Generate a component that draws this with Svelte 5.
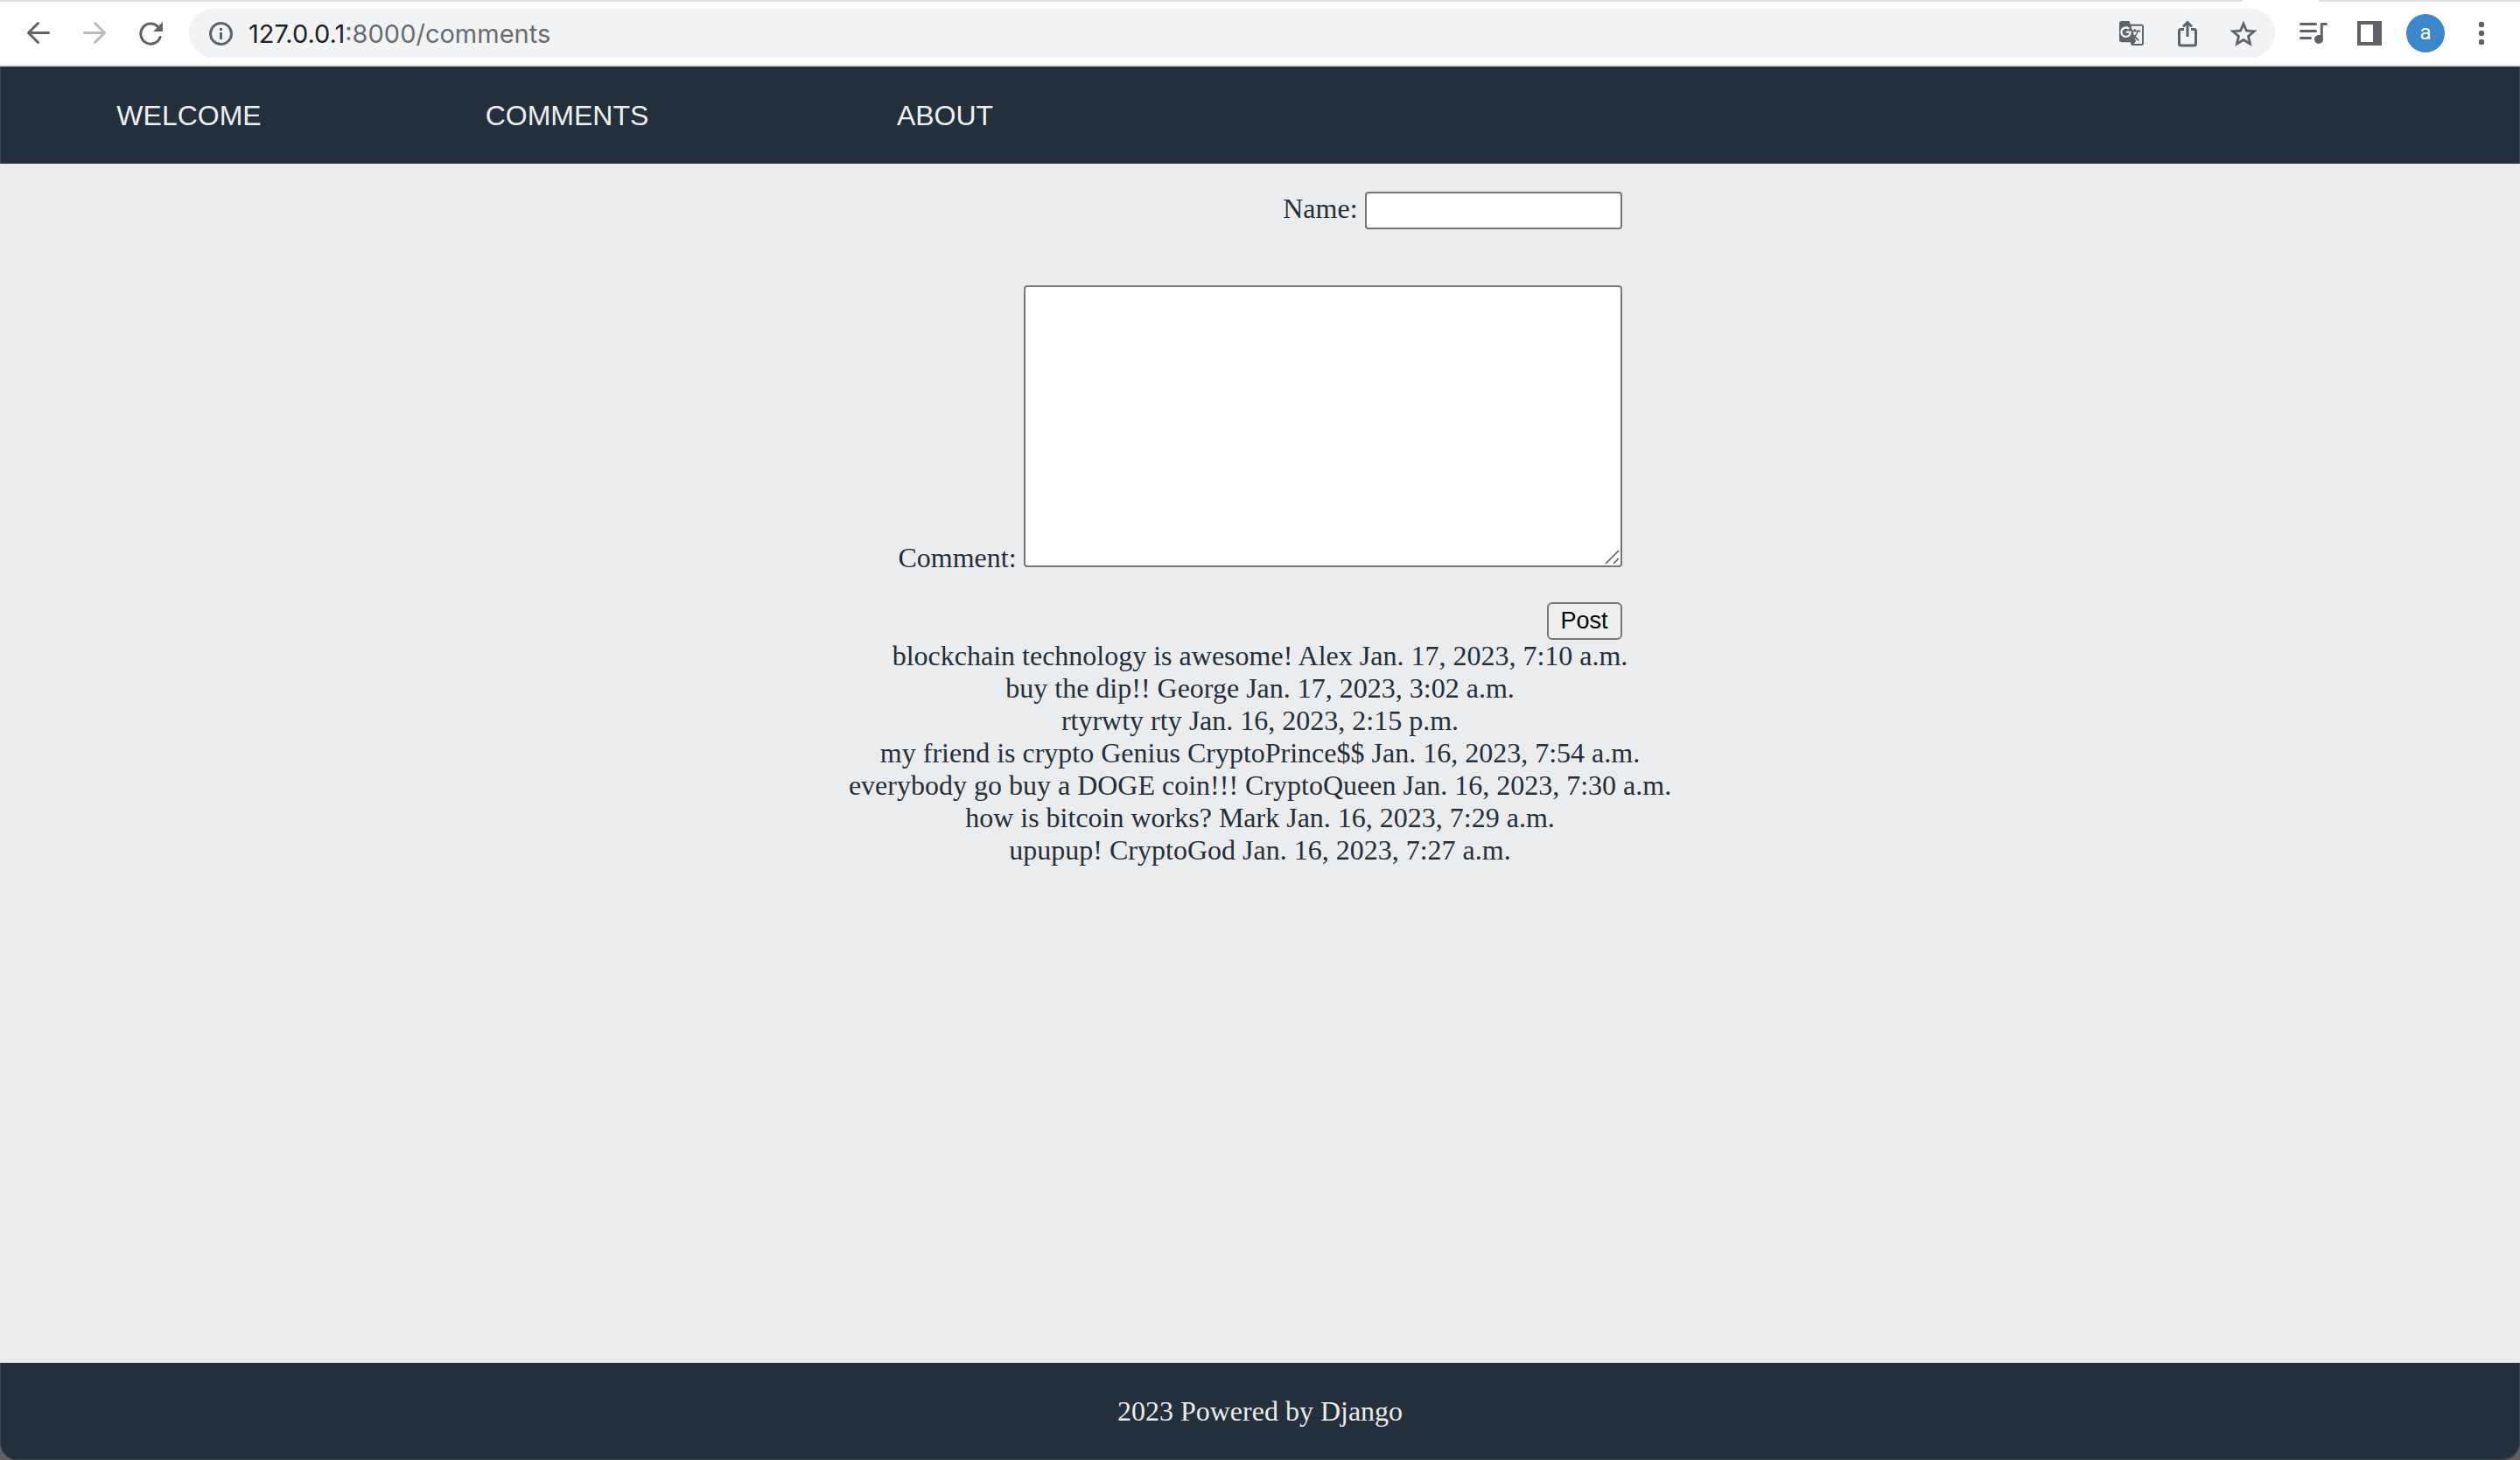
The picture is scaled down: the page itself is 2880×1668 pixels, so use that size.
<script>
  const links = [
    { label: 'WELCOME', href: '#welcome' },
    { label: 'COMMENTS', href: '#comments' },
    { label: 'ABOUT', href: '#about' },
  ];

  const comments = [
    { text: 'blockchain technology is awesome!', author: 'Alex', date: 'Jan. 17, 2023, 7:10 a.m.' },
    { text: 'buy the dip!!', author: 'George', date: 'Jan. 17, 2023, 3:02 a.m.' },
    { text: 'rtyrwty', author: 'rty', date: 'Jan. 16, 2023, 2:15 p.m.' },
    { text: 'my friend is crypto Genius', author: 'CryptoPrince$$', date: 'Jan. 16, 2023, 7:54 a.m.' },
    { text: 'everybody go buy a DOGE coin!!!', author: 'CryptoQueen', date: 'Jan. 16, 2023, 7:30 a.m.' },
    { text: 'how is bitcoin works?', author: 'Mark', date: 'Jan. 16, 2023, 7:29 a.m.' },
    { text: 'upupup!', author: 'CryptoGod', date: 'Jan. 16, 2023, 7:27 a.m.' },
  ];
</script>

<div class="window">
  <div class="tab-edge"><span class="edge-left"></span><span class="edge-right"></span></div>
  <div class="toolbar">
    <button class="tool" type="button" aria-label="Back">
      <svg viewBox="0 0 40 40"><path class="line" d="M31.5 19.5H9M19.5 8.5L8.5 19.5l11 11" /></svg>
    </button>
    <button class="tool faded" type="button" aria-label="Forward">
      <svg viewBox="0 0 40 40"><path class="line" d="M8.5 19.5H31M20.5 8.5l11 11-11 11" /></svg>
    </button>
    <button class="tool" type="button" aria-label="Reload">
      <svg viewBox="0 0 40 40">
        <path class="line" d="M28.5 12.5A11.5 11.5 0 1 0 31.2 24.3" />
        <path d="M34 7v11H23z" />
      </svg>
    </button>

    <div class="address">
      <button class="info" type="button" aria-label="Site information">
        <svg viewBox="0 0 40 40">
          <circle class="line" cx="20.5" cy="20.5" r="12" />
          <path d="M19 14h3v3h-3zM19 19h3v8h-3z" />
        </svg>
      </button>
      <span class="url">127.0.0.1<span class="path">:8000/comments</span></span>
      <button class="tool" type="button" aria-label="Translate this page">
        <svg viewBox="0 0 40 40">
          <g transform="translate(4.73 4.73) scale(1.273)">
            <path d="M21 4H11l-1-3H3c-1.1 0-2 .9-2 2v15c0 1.1.9 2 2 2h8l1 3h9c1.1 0 2-.9 2-2V6c0-1.1-.9-2-2-2zM7 16c-2.76 0-5-2.24-5-5s2.24-5 5-5c1.35 0 2.48.5 3.35 1.3L9.03 8.57c-.38-.36-1.04-.78-2.03-.78-1.74 0-3.15 1.44-3.15 3.21S5.26 14.21 7 14.21c2.01 0 2.84-1.44 2.92-2.41H7v-1.71h4.68c.07.31.12.61.12 1.02C11.8 13.97 9.89 16 7 16zm6.17-5.42h3.7c-.43 1.25-1.11 2.43-2.05 3.47-.31-.35-.6-.72-.86-1.1l-.79-2.37zm8.33 9.92c0 .55-.45 1-1 1H14l2-2.5-1.04-3.1 3.1 3.1.92-.92-3.3-3.25.02-.02c1.13-1.25 1.93-2.69 2.4-4.22H20v-1.3h-4.53V8h-1.29v1.29h-1.44L11.46 5.5h9.04c.55 0 1 .45 1 1v14z" />
          </g>
        </svg>
      </button>
      <button class="tool" type="button" aria-label="Share this page">
        <svg viewBox="0 0 40 40">
          <path class="thin" d="M16 15.5h-3.5a2 2 0 0 0-2 2v14.500a2 2 0 0 0 2 2h15a2 2 0 0 0 2-2V17.500a2 2 0 0 0-2-2H24M20 24V8.500M15 12.500l5-5 5 5" />
        </svg>
      </button>
      <button class="tool" type="button" aria-label="Bookmark this page">
        <svg viewBox="0 0 40 40">
          <g transform="translate(2 3) scale(1.5)">
            <path class="bold" d="M22 9.24l-7.19-.62L12 2 9.19 8.63 2 9.24l5.46 4.73L5.82 21 12 17.27 18.18 21l-1.63-7.03L22 9.24zM12 15.4l-3.76 2.27 1-4.28-3.32-2.88 4.38-.38L12 6.1l1.71 4.04 4.38.38-3.32 2.88 1 4.28L12 15.4z" />
          </g>
        </svg>
      </button>
    </div>

    <button class="tool" type="button" aria-label="Media controls">
      <svg viewBox="0 0 40 40">
        <path class="line" d="M5.5 9.5h17M5.5 17.5h17M5.5 25.5h11M34.5 9.5h-5.2v18" />
        <circle cx="26" cy="27" r="5" />
      </svg>
    </button>
    <button class="tool" type="button" aria-label="Side panel">
      <svg viewBox="0 0 40 40"><path fill-rule="evenodd" d="M6 6h28v28H6zM10 10v20h14V10z" /></svg>
    </button>
    <button class="tool" type="button" aria-label="Profile"><span class="avatar">a</span></button>
    <button class="tool" type="button" aria-label="Menu">
      <svg viewBox="0 0 40 40">
        <circle cx="20" cy="10" r="3.2" /><circle cx="20" cy="20" r="3.2" /><circle cx="20" cy="30" r="3.2" />
      </svg>
    </button>
  </div>

  <nav>
    {#each links as link}
      <a href={link.href}>{link.label}</a>
    {/each}
  </nav>

  <main>
    <form onsubmit={(event) => event.preventDefault()}>
      <div class="row name">
        <label for="name">Name:</label>
        <input id="name" type="text" />
      </div>
      <div class="row comment">
        <label for="comment">Comment:</label>
        <div class="area">
          <textarea id="comment"></textarea>
          <svg class="grip" viewBox="0 0 20 20" aria-hidden="true"><path d="M2 17L17 2M11 17l6-6" /></svg>
        </div>
      </div>
      <button class="post" type="submit">Post</button>
    </form>
    <ul>
      {#each comments as comment}
        <li>{comment.text} {comment.author} {comment.date}</li>
      {/each}
    </ul>
  </main>

  <footer>2023 Powered by Django</footer>
</div>

<style>
  :global(body) {
    margin: 0;
  }

  .window {
    display: flex;
    flex-direction: column;
    min-height: 100vh;
    background: #625f64;
    color: #232f3b;
    font-family: 'Liberation Serif', 'Times New Roman', serif;
    font-size: 32px;
    line-height: 37px;
  }

  button {
    margin: 0;
    font-family: 'Liberation Sans', Arial, sans-serif;
  }

  .tab-edge {
    display: flex;
    justify-content: space-between;
    height: 2px;
    background: #fff;
  }

  .edge-left {
    width: 89%;
    background: #dfdfe5;
  }

  .edge-right {
    width: 8%;
    background: #dfdfe5;
  }

  .toolbar {
    display: flex;
    align-items: center;
    padding: 8px 12px;
    background: #fff;
    border-bottom: 2px solid #dadfdf;
  }

  .tool,
  .info {
    display: flex;
    flex: none;
    align-items: center;
    justify-content: center;
    width: 64px;
    height: 56px;
    padding: 0;
    border: 0;
    background: none;
    color: #5f6368;
  }

  .info {
    width: 40px;
  }

  .faded {
    color: #bababc;
  }

  .toolbar svg {
    width: 40px;
    height: 40px;
    fill: currentColor;
  }

  .toolbar .line,
  .toolbar .thin {
    fill: none;
    stroke: currentColor;
    stroke-width: 3;
    stroke-linecap: round;
    stroke-linejoin: round;
  }

  .toolbar .thin {
    stroke-linecap: butt;
    stroke-linejoin: miter;
  }

  .toolbar .bold {
    stroke: currentColor;
    stroke-width: 0.3;
  }

  .address {
    display: flex;
    flex: 1;
    align-items: center;
    min-width: 0;
    height: 56px;
    margin: 0 12px;
    padding: 0 4px 0 16px;
    border-radius: 28px;
    background: #f1f3f4;
    box-sizing: border-box;
  }

  .url {
    flex: 1;
    padding-left: 12px;
    color: #202124;
    font-family: Inter, sans-serif;
    font-size: 29px;
  }

  .path {
    color: #686b6f;
  }

  .avatar {
    width: 44px;
    height: 44px;
    border-radius: 50%;
    background: #3c86cb;
    color: #fff;
    font-family: Roboto, sans-serif;
    font-size: 24px;
    line-height: 42px;
    text-align: center;
  }

  nav {
    display: flex;
    background: #232f3b;
    box-shadow: inset 1px 0 #3d4853, inset -1px 0 #3d4853;
  }

  nav a {
    width: 15%;
    padding: 38px 0 36px;
    color: #ecf0f1;
    font-family: 'Liberation Sans', Arial, sans-serif;
    text-align: center;
    text-decoration: none;
  }

  main {
    display: flex;
    flex: 1;
    flex-direction: column;
    align-items: center;
    padding-top: 32px;
    background: #ebeced;
  }

  form {
    display: flex;
    flex-direction: column;
    align-items: flex-end;
  }

  .row {
    display: flex;
    gap: 8px;
  }

  .name {
    align-items: baseline;
    margin-bottom: 64px;
  }

  .comment {
    align-items: flex-end;
    margin-bottom: 32px;
  }

  input,
  textarea {
    display: block;
    box-sizing: border-box;
    margin: 0;
    padding: 4px;
    border: 2px solid #767676;
    border-radius: 4px;
    background: #fff;
    font-family: 'Liberation Sans', Arial, sans-serif;
    font-size: 27px;
  }

  input {
    width: 294px;
    height: 43px;
  }

  textarea {
    width: 684px;
    height: 322px;
    resize: none;
  }

  .area {
    position: relative;
    margin-bottom: 8px;
  }

  .grip {
    position: absolute;
    right: 1px;
    bottom: 1px;
    width: 20px;
    height: 20px;
    fill: none;
    stroke: #555;
    stroke-width: 1.5;
  }

  .post {
    height: 43px;
    padding: 0 14px;
    border: 2px solid #767676;
    border-radius: 6px;
    background: #efefef;
    color: #000;
    font-size: 27px;
    line-height: 37px;
  }

  ul {
    margin: 0;
    padding: 0;
    list-style: none;
    text-align: center;
  }

  footer {
    padding: 37px 0;
    border-radius: 0 0 20px 20px;
    background: #232f3b;
    box-shadow: inset 1px 0 #3d4853, inset -1px -1px #3d4853;
    color: #eaebed;
    text-align: center;
  }
</style>
